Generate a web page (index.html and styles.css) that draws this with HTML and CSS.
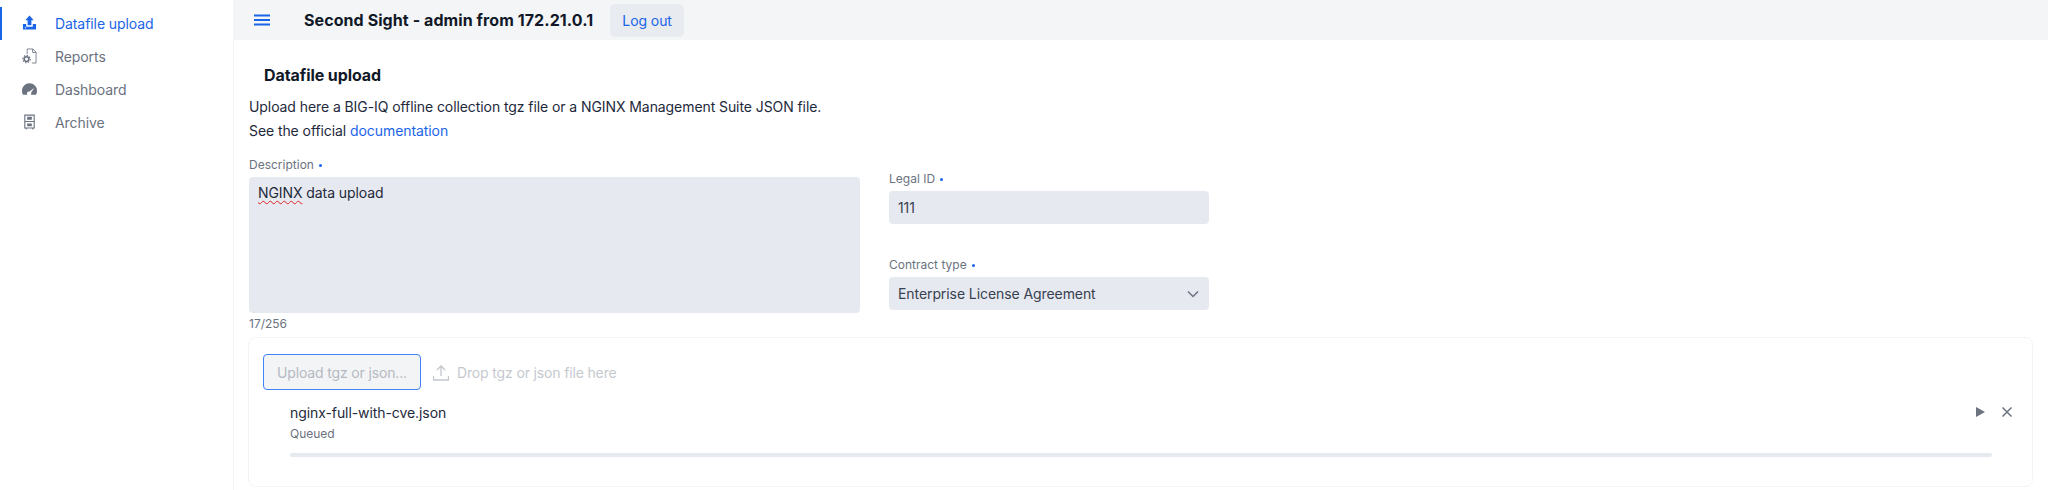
FILE: index.html
```html
<!DOCTYPE html>
<html>
<head>
  <title>Second Sight</title>
  <link rel="stylesheet" href="styles.css">
</head>
<body>
  <aside class="sidebar">
    <a class="nav-item active">
      <svg class="nav-icon" viewBox="0 0 16 16"><path fill="currentColor" d="M8 0 12.500 5H10v5.500H6V5H3.500zM1 9h3.500v3h7V9H15v6H1zM3 12.500v1h1.200v-1z"/></svg>
      <span>Datafile upload</span>
    </a>
    <a class="nav-item">
      <svg class="nav-icon" viewBox="0 0 16 16"><path fill="none" stroke="currentColor" stroke-width="0.900" d="M5.500 6V.5h6l3.500 3.500v11.500h-4.500M11.300.5v3.700H15"/><circle cx="4.800" cy="11.300" r="2.500" fill="none" stroke="currentColor" stroke-width="1.700"/><circle cx="4.800" cy="11.300" r="3.900" fill="none" stroke="currentColor" stroke-width="1.300" stroke-dasharray="1.500 1.500"/></svg>
      <span>Reports</span>
    </a>
    <a class="nav-item">
      <svg class="nav-icon" viewBox="0 0 16 16"><path fill="currentColor" d="M8 2a7.800 7.800 0 0 1 8 8c0 1.800-.5 3.200-1.200 4H9.400c.5-.5.600-1.200.3-1.900L13 6.800 8 10.600c-1-.2-2 .1-2.500 1-.4.800-.3 1.700.2 2.400H1.200C.5 13.200 0 11.800 0 10a7.800 7.800 0 0 1 8-8z"/></svg>
      <span>Dashboard</span>
    </a>
    <a class="nav-item">
      <svg class="nav-icon" viewBox="0 0 16 16"><path fill="none" stroke="currentColor" stroke-width="1.200" d="M3 .6h10v13.800H3zM3 7.500h10M4.500 14.500V16M11.500 14.500V16"/><path fill="currentColor" d="M5.500 2.500h5v3h-5zM5.500 9.500h5v3h-5z"/></svg>
      <span>Archive</span>
    </a>
  </aside>

  <div class="page">
    <header class="topbar">
      <button class="menu-btn">
        <svg width="16" height="12" viewBox="0 0 16 12"><path fill="none" stroke="currentColor" stroke-width="1.800" d="M0 1.500h16M0 6h16M0 10.500h16"/></svg>
      </button>
      <div class="app-title">Second Sight - admin from 172.21.0.1</div>
      <button class="logout-btn">Log out</button>
    </header>

    <main class="content">
      <h2 class="page-title">Datafile upload</h2>
      <p class="intro">Upload here a BIG-IQ offline collection tgz file or a NGINX Management Suite JSON file.</p>
      <p class="intro">See the official <a class="link">documentation</a></p>

      <div class="form-grid">
        <div class="desc-col">
          <label class="field-label">Description <i class="req"></i></label>
          <div class="textarea"><span class="misspelt">NGINX</span> data upload</div>
          <div class="counter">17/256</div>
        </div>
        <div class="side-col">
          <div class="field">
            <label class="field-label">Legal ID <i class="req"></i></label>
            <input class="input" type="text" value="111">
          </div>
          <div class="field">
            <label class="field-label">Contract type <i class="req"></i></label>
            <div class="select-wrap">
              <select class="input select"><option>Enterprise License Agreement</option></select>
              <svg class="chevron" width="12" height="8" viewBox="0 0 12 8"><path fill="none" stroke="currentColor" stroke-width="1.500" d="M1 1.500l5 5 5-5"/></svg>
            </div>
          </div>
        </div>
      </div>

      <section class="upload-box">
        <div class="upload-row">
          <button class="upload-btn">Upload tgz or json...</button>
          <svg class="drop-icon" width="16" height="17" viewBox="0 0 16 17"><path fill="none" stroke="currentColor" stroke-width="1.300" d="M8 12V2M4 6l4-4 4 4M.5 12v4h15v-4"/></svg>
          <span class="drop-text">Drop tgz or json file here</span>
        </div>
        <div class="file-row">
          <div class="file-head">
            <div>
              <div class="file-name">nginx-full-with-cve.json</div>
              <div class="file-status">Queued</div>
            </div>
            <div class="file-actions">
              <svg width="9" height="10" viewBox="0 0 9 10"><path fill="currentColor" d="M0 0l9 5-9 5z"/></svg>
              <svg width="10" height="10" viewBox="0 0 10 10"><path fill="none" stroke="currentColor" stroke-width="1.500" d="M.5.5l9 9M9.500.5l-9 9"/></svg>
            </div>
          </div>
          <div class="progress"></div>
        </div>
      </section>
    </main>
  </div>
</body>
</html>
```

FILE: styles.css
```css
* {
  box-sizing: border-box;
}
html, body {
  height: 490px;
  overflow: hidden;
}
body {
  margin: 0;
  display: flex;
  font-family: 'Inter', sans-serif;
  font-size: 14px;
  letter-spacing: -0.08px;
  color: #1e293b;
  background: #fff;
}
.sidebar {
  width: 234px;
  flex: none;
  padding-top: 7px;
  border-right: 1px solid #f3f4f6;
}
.nav-item {
  display: flex;
  align-items: center;
  gap: 18px;
  height: 32.9px;
  padding-left: 22px;
  color: #6b7280;
}
.nav-item.active {
  color: #1a64e8;
  box-shadow: inset 2px 0 0 #1a64e8;
}
.nav-icon {
  width: 15px;
  height: 16px;
  flex: none;
}
.page {
  flex: 1;
  min-width: 0;
}
.topbar {
  display: flex;
  align-items: center;
  height: 40px;
  padding-left: 20px;
  background: #f4f5f7;
}
.menu-btn {
  display: flex;
  width: 50px;
  padding: 0;
  border: none;
  background: none;
  color: #1a64e8;
}
.app-title {
  font-size: 16px;
  font-weight: 700;
  letter-spacing: 0.08px;
  color: #111827;
}
.logout-btn {
  margin-left: 17px;
  width: 74px;
  height: 33px;
  padding: 0;
  font: inherit;
  letter-spacing: inherit;
  color: #1a64e8;
  background: #e8ebef;
  border: none;
  border-radius: 5px;
}
.content {
  padding: 0 15px;
}
.page-title {
  margin: 25px 0 10px 15px;
  font-size: 16px;
  line-height: 20px;
  color: #111827;
}
.intro {
  margin: 0;
  height: 24px;
  line-height: 24px;
}
.link {
  color: #1a64e8;
}
.form-grid {
  display: grid;
  grid-template-columns: 611px 320px;
  column-gap: 29px;
  margin-top: 14px;
}
.field-label {
  display: block;
  font-size: 12px;
  line-height: 16px;
  letter-spacing: 0;
  color: #6b7280;
  margin-bottom: 4px;
}
.req {
  display: inline-block;
  width: 3px;
  height: 3px;
  margin-left: 2px;
  vertical-align: 2px;
  border-radius: 50%;
  background: #1a64e8;
}
.textarea {
  height: 136px;
  padding: 6px 9px;
  line-height: 20px;
  background: #e6e9ef;
  border-radius: 4px;
}
.misspelt {
  text-decoration: underline wavy #e02424 1px;
  text-underline-offset: 2px;
}
.counter {
  margin-top: 4px;
  font-size: 12px;
  line-height: 13px;
  letter-spacing: 0;
  color: #6b7280;
}
.side-col {
  padding-top: 14px;
}
.field {
  margin-bottom: 33px;
}
.field:last-child {
  margin-bottom: 0;
}
.input {
  display: block;
  width: 100%;
  height: 33px;
  padding: 0 9px;
  font: inherit;
  letter-spacing: inherit;
  color: #374151;
  background: #e6e9ef;
  border: none;
  border-radius: 4px;
}
.select {
  appearance: none;
}
.select-wrap {
  position: relative;
}
.chevron {
  position: absolute;
  right: 10px;
  top: 13px;
  color: #6b7280;
}
.upload-box {
  height: 150px;
  margin-top: 7px;
  margin-left: -1px;
  padding: 16px 14px 0;
  border: 1px dotted #e5e7eb;
  border-radius: 8px;
}
.upload-row {
  display: flex;
  align-items: center;
  letter-spacing: -0.15px;
}
.upload-btn {
  width: 158px;
  height: 36px;
  padding: 0;
  font: inherit;
  letter-spacing: inherit;
  color: #b5bac2;
  background: #f3f4f6;
  border: 1px solid #3f83f8;
  border-radius: 4px;
}
.drop-icon {
  margin-left: 12px;
  color: #c3c7cd;
}
.drop-text {
  margin-left: 8px;
  color: #c5c9cf;
}
.file-row {
  margin-top: 12px;
  padding: 0 26px 0 27px;
}
.file-head {
  display: flex;
  justify-content: space-between;
  align-items: flex-start;
}
.file-name {
  height: 22px;
  line-height: 22px;
}
.file-status {
  margin-top: 1px;
  height: 18px;
  font-size: 12px;
  line-height: 18px;
  letter-spacing: 0;
  color: #6b7280;
}
.file-actions {
  display: flex;
  align-items: center;
  gap: 17px;
  height: 20px;
  margin-right: -20px;
  color: #6b7280;
}
.progress {
  height: 4px;
  margin-top: 10px;
  border-radius: 2px;
  background: #e6e9ef;
}
```
